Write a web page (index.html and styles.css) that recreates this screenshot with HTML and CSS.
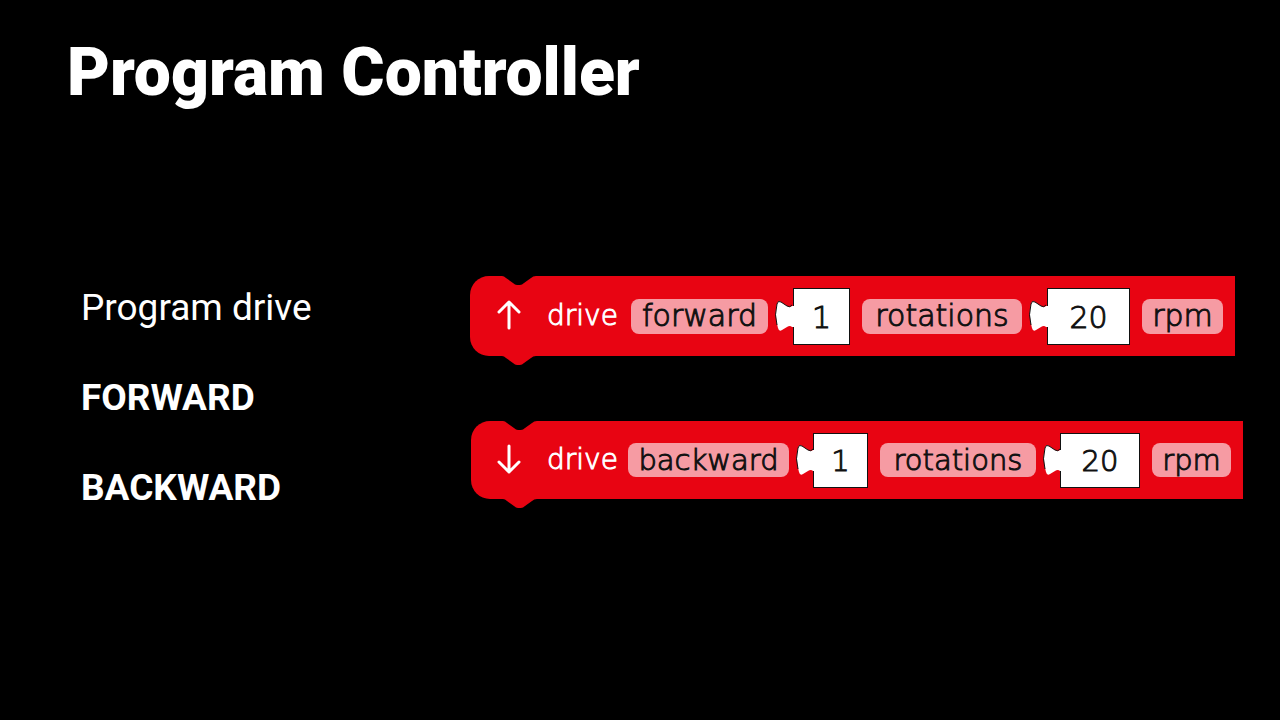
FILE: index.html
```html
<!DOCTYPE html>
<html lang="en">
<head>
<meta charset="utf-8">
<title>Program Controller</title>
<link rel="stylesheet" href="styles.css">
</head>
<body>
<h1 class="title">Program Controller</h1>
<main class="content">
  <div class="steps">
    <p>Program drive</p>
    <p><strong>FORWARD</strong></p>
    <p><strong>BACKWARD</strong></p>
  </div>
  <div class="blocks">
    <div class="block block-forward">
      <svg class="notch" width="34" height="10" viewBox="0 0 34 10"><path d="M0 0h34Q31 0 29 2L22 7Q20 9 18 9H15Q13 9 11 7L4 2Q2 0 0 0Z"/></svg>
      <svg class="arrow" width="24" height="30" viewBox="0 0 24 30"><path d="M12 27V1M2 11L12 1L22 11"/></svg>
      <span class="word">drive</span>
      <span class="chip wide-a">forward</span>
      <span class="plug"><svg class="knob" width="19" height="32" viewBox="0 0 19 32"><path class="knob-fill" d="M19 6L17 6Q15 8 12 6L6 2Q3 0 2 4Q-1 15 3 28Q4 32 7 30L12 27Q15 25 17 27L19 27Z"/><path class="knob-line" d="M17 5Q15 8 12 6L6 2Q3 0 2 4Q-1 15 2 25"/></svg><span class="value narrow">1</span></span>
      <span class="chip wide-b">rotations</span>
      <span class="plug"><svg class="knob" width="19" height="32" viewBox="0 0 19 32"><path class="knob-fill" d="M19 6L17 6Q15 8 12 6L6 2Q3 0 2 4Q-1 15 3 28Q4 32 7 30L12 27Q15 25 17 27L19 27Z"/><path class="knob-line" d="M17 5Q15 8 12 6L6 2Q3 0 2 4Q-1 15 2 25"/></svg><span class="value broad">20</span></span>
      <span class="chip unit">rpm</span>
      <svg class="tab" width="34" height="10" viewBox="0 0 34 10"><path d="M0 0h34Q31 0 29 2L22 7Q20 9 18 9H15Q13 9 11 7L4 2Q2 0 0 0Z"/></svg>
    </div>
    <div class="block block-backward">
      <svg class="notch" width="34" height="10" viewBox="0 0 34 10"><path d="M0 0h34Q31 0 29 2L22 7Q20 9 18 9H15Q13 9 11 7L4 2Q2 0 0 0Z"/></svg>
      <svg class="arrow" width="24" height="30" viewBox="0 0 24 30"><path d="M12 1V27M2 17L12 27L22 17"/></svg>
      <span class="word">drive</span>
      <span class="chip wide-a">backward</span>
      <span class="plug"><svg class="knob" width="19" height="32" viewBox="0 0 19 32"><path class="knob-fill" d="M19 6L17 6Q15 8 12 6L6 2Q3 0 2 4Q-1 15 3 28Q4 32 7 30L12 27Q15 25 17 27L19 27Z"/><path class="knob-line" d="M17 5Q15 8 12 6L6 2Q3 0 2 4Q-1 15 2 25"/></svg><span class="value narrow">1</span></span>
      <span class="chip wide-b">rotations</span>
      <span class="plug"><svg class="knob" width="19" height="32" viewBox="0 0 19 32"><path class="knob-fill" d="M19 6L17 6Q15 8 12 6L6 2Q3 0 2 4Q-1 15 3 28Q4 32 7 30L12 27Q15 25 17 27L19 27Z"/><path class="knob-line" d="M17 5Q15 8 12 6L6 2Q3 0 2 4Q-1 15 2 25"/></svg><span class="value broad">20</span></span>
      <span class="chip unit">rpm</span>
      <svg class="tab" width="34" height="10" viewBox="0 0 34 10"><path d="M0 0h34Q31 0 29 2L22 7Q20 9 18 9H15Q13 9 11 7L4 2Q2 0 0 0Z"/></svg>
    </div>
  </div>
</main>
</body>
</html>
```
FILE: styles.css
```css
* { box-sizing: border-box; }

body {
  margin: 0;
  background: #000;
  color: #fff;
  font-family: Roboto, "Liberation Sans", sans-serif;
}

.title {
  margin: 0;
  padding: 33px 67px 0;
  font-size: 66px;
  line-height: 80px;
  font-weight: 900;
}

.content {
  display: flex;
  justify-content: space-between;
  padding: 150px 37px 0 81px;
}

.steps p {
  margin: 0;
  font-size: 37px;
  line-height: 90px;
}

.blocks {
  display: flex;
  flex-direction: column;
  align-items: flex-end;
  gap: 65px;
  padding-top: 13px;
}

.block {
  position: relative;
  display: flex;
  align-items: center;
  height: 80px;
  background: #e80412;
  border-radius: 19px 0 0 19px;
  font-family: "DejaVu Sans", "DejaVu Sans Light", sans-serif;
  font-size: 30px;
  font-weight: 200;
  line-height: 34px;
  -webkit-text-stroke: 1px currentColor;
}

.block-forward { margin-right: 8px; padding: 0 12px 0 27px; }

.block-backward {
  height: 78px;
  padding: 0 12px 0 26px;
  font-size: 29px;
}

.notch, .tab { position: absolute; left: 32px; }
.notch { top: 0; fill: #000; }
.tab { top: 100%; fill: #e80412; }

.arrow {
  margin-right: 26px;
  fill: none;
  stroke: #fff;
  stroke-width: 3;
  stroke-linecap: round;
  stroke-linejoin: round;
  overflow: visible;
}

.word { width: 84px; font-size: 28px; }
.block-backward .word { width: 81px; }

.chip {
  height: 35px;
  margin-right: 7px;
  border-radius: 8px;
  background: #f69ba3;
  color: #111;
  text-align: center;
}

.plug { display: flex; align-items: center; margin-right: 12px; }

.knob { position: relative; margin-right: -1px; }
.knob-fill { fill: #fff; }
.knob-line { fill: none; stroke: #111; stroke-width: 1; }
.block-backward .knob { margin-right: -2px; }

.value {
  height: 57px;
  border: 1px solid #111;
  background: #fff;
  color: #111;
  line-height: 57px;
  text-align: center;
}

.block-backward .value { height: 55px; line-height: 55px; }

.wide-a { width: 137px; }
.wide-b { width: 160px; }
.unit { width: 81px; margin-right: 0; }
.narrow { width: 57px; }
.broad { width: 83px; }

.block-backward .chip { height: 34px; }
.block-backward .wide-a { width: 161px; }
.block-backward .wide-b { width: 156px; }
.block-backward .unit { width: 79px; }
.block-backward .narrow { width: 55px; }
.block-backward .broad { width: 80px; }
```
